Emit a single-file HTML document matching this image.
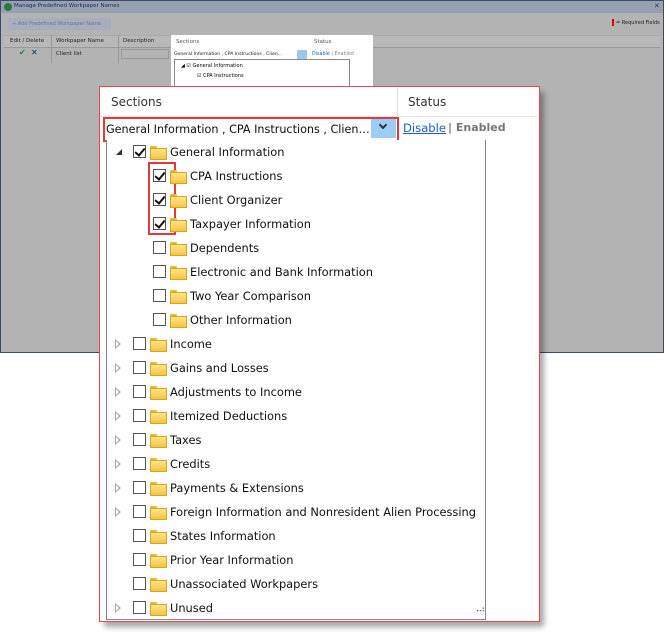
<!DOCTYPE html>
<html><head><meta charset="utf-8"><style>
*{margin:0;padding:0;box-sizing:border-box}
body{width:665px;height:636px;background:#fff;position:relative;overflow:hidden;font-family:"DejaVu Sans","Liberation Sans",sans-serif}
.a{position:absolute;white-space:nowrap}
.win{left:0;top:0;width:664px;height:353px;background:#b3b3b3;border:1px solid #3a4a6a}
.cb{position:absolute;width:13px;height:13px;border:1px solid #555;background:#fff}
.cb.k::after{content:"";position:absolute;left:3px;top:0px;width:4px;height:8px;border:solid #111;border-width:0 2px 2px 0;transform:rotate(40deg)}
.fd{position:absolute;width:15px;height:12px}
.fd::before{content:"";position:absolute;left:0;top:0;width:7px;height:3px;background:#e8b838;border-radius:1px 1px 0 0}
.fd::after{content:"";position:absolute;left:0;top:2px;width:15px;height:10px;background:linear-gradient(#ffe58a,#f5c542);border:1px solid #d9a520}
.t{position:absolute;font-size:11.4px;color:#111;white-space:nowrap}
.tri{position:absolute;width:0;height:0;border-top:5px solid transparent;border-bottom:5px solid transparent;border-left:6px solid #aaa}
.tri::after{content:"";position:absolute;left:-5px;top:-3px;border-top:3px solid transparent;border-bottom:3px solid transparent;border-left:3px solid #fff}
</style></head><body>
<div class="a win">
 <div class="a" style="left:0;top:0;width:662px;height:12px;background:#97a0b2"></div>
 <div class="a" style="left:3px;top:2px;width:8px;height:8px;border-radius:50%;background:#2a7a3a"></div>
 <div class="a" style="left:13px;top:2px;font-size:5.5px;color:#1a2a50">Manage Predefined Workpaper Names</div>
 <div class="a" style="left:653px;top:1px;font-size:7px;color:#1a3a80">✕</div>
 <div class="a" style="left:7px;top:17px;width:103px;height:12px;background:#a7adbd;font-size:5px;color:#6a7890;padding:3px 0 0 4px">+ Add Predefined Workpaper Name</div>
 <div class="a" style="left:611px;top:18px;width:2px;height:7px;background:#d00"></div>
 <div class="a" style="left:615px;top:19px;font-size:5px;color:#222">= Required Fields</div>
 <div class="a" style="left:3px;top:34px;width:656px;height:13px;background:#b8b8b8;border-top:1px solid #aaa;border-bottom:1px solid #999"></div>
 <div class="a" style="left:9px;top:37px;font-size:5.5px;color:#222">Edit / Delete</div>
 <div class="a" style="left:50px;top:34px;width:1px;height:28px;background:#999"></div>
 <div class="a" style="left:55px;top:37px;font-size:5.5px;color:#222">Workpaper Name</div>
 <div class="a" style="left:117px;top:34px;width:1px;height:28px;background:#999"></div>
 <div class="a" style="left:122px;top:37px;font-size:5.5px;color:#222">Description</div>
 <div class="a" style="left:18px;top:47px;font-size:8px;color:#1a8a2a">✔</div>
 <div class="a" style="left:30px;top:47px;font-size:8px;color:#0a2a70;font-weight:bold">✕</div>
 <div class="a" style="left:55px;top:50px;font-size:5.5px;color:#222">Client list</div>
 <div class="a" style="left:120px;top:48px;width:48px;height:10px;border:1px solid #999"></div>
 <div class="a" style="left:170px;top:34px;width:202px;height:58px;background:#fff"></div>
 <div class="a" style="left:175px;top:38px;font-size:5.5px;color:#555">Sections</div>
 <div class="a" style="left:313px;top:38px;font-size:5.5px;color:#555">Status</div>
 <div class="a" style="left:173px;top:51px;font-size:4.6px;color:#111">General Information , CPA Instructions , Clien...</div>
 <div class="a" style="left:296px;top:49px;width:10px;height:9px;background:#9cc6ee"></div>
 <div class="a" style="left:311px;top:51px;font-size:4.8px;color:#1a60c0">Disable <span style="color:#888">| Enabled</span></div>
 <div class="a" style="left:173px;top:58px;width:176px;height:34px;border:1px solid #888"></div>
 <div class="a" style="left:180px;top:62px;font-size:5px">◢ ☑ General Information</div>
 <div class="a" style="left:196px;top:72px;font-size:5px">☑ CPA Instructions</div>
</div>
<div class="a" style="left:104px;top:92px;width:440px;height:535px;background:rgba(0,0,0,.35);filter:blur(3px)"></div>
<div class="a" style="left:99px;top:86px;width:441px;height:536px;background:#fff;border:1px solid #e84a4a"></div>
<div class="a" style="left:100px;top:116px;width:438px;height:1px;background:#e6e6e6"></div>
<div class="a" style="left:397px;top:87px;width:1px;height:30px;background:#ddd"></div>
<div class="t" style="left:111px;top:95px;color:#333;font-size:12px">Sections</div>
<div class="t" style="left:408px;top:95px;color:#333;font-size:12px">Status</div>
<div class="a" style="left:103px;top:117px;width:296px;height:25px;border:2px solid #e23a3a"></div>
<div class="t" style="left:106px;top:123px;font-size:11.2px">General Information , CPA Instructions , Clien…</div>
<div class="a" style="left:371px;top:119px;width:25px;height:19px;background:#9ccdf5"></div>
<div class="a" style="left:380px;top:122px;width:6px;height:6px;border:solid #333;border-width:0 2px 2px 0;transform:rotate(45deg)"></div>
<div class="t" style="left:403px;top:121px;color:#1a5fc8;text-decoration:underline;font-size:11.6px">Disable</div>
<div class="t" style="left:448px;top:121px;color:#777;font-weight:bold;font-size:11px">| Enabled</div>
<div class="a" style="left:106px;top:140px;width:380px;height:480px;border:1px solid #888;border-top:none;background:#fff"></div>
<div class="a" style="left:148px;top:162px;width:28px;height:73px;border:2px solid #e23a3a"></div>
<div class="a" style="left:473px;top:605px;font-size:9px;color:#555;letter-spacing:-1px">⠠⠴</div>
<div id="tree"></div>
<script>
var rows=[[0,1,"General Information","open"],[1,1,"CPA Instructions"],[1,1,"Client Organizer"],[1,1,"Taxpayer Information"],[1,0,"Dependents"],[1,0,"Electronic and Bank Information"],[1,0,"Two Year Comparison"],[1,0,"Other Information"],[0,0,"Income","t"],[0,0,"Gains and Losses","t"],[0,0,"Adjustments to Income","t"],[0,0,"Itemized Deductions","t"],[0,0,"Taxes","t"],[0,0,"Credits","t"],[0,0,"Payments & Extensions","t"],[0,0,"Foreign Information and Nonresident Alien Processing","t"],[0,0,"States Information"],[0,0,"Prior Year Information"],[0,0,"Unassociated Workpapers"],[0,0,"Unused","t"]];
var h="";rows.forEach(function(r,i){var c=152+24*i,o=r[0]?20:0;
if(r[3]=="open")h+='<div class="a" style="left:116px;top:'+(c-3)+'px;width:0;height:0;border-left:6px solid transparent;border-bottom:6px solid #333"></div>';
if(r[3]=="t")h+='<div class="tri" style="left:115px;top:'+(c-5)+'px"></div>';
h+='<div class="cb'+(r[1]?' k':'')+'" style="left:'+(133+o)+'px;top:'+(c-7)+'px"></div>';
h+='<div class="fd" style="left:'+(150+o)+'px;top:'+(c-6)+'px"></div>';
h+='<div class="t" style="left:'+(170+o)+'px;top:'+(c-7)+'px">'+r[2].replace("&","&amp;")+'</div>';});
document.getElementById("tree").innerHTML=h;
</script>
</body></html>
